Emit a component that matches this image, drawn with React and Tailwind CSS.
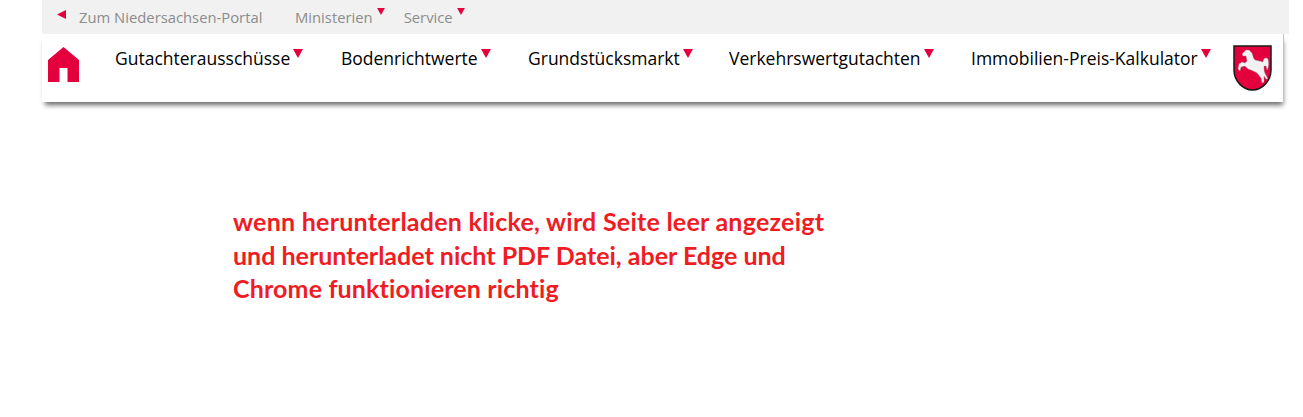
import React from 'react';

const navItems = [
    { label: 'Gutachterausschüsse', w: 'w-[226px]' },
    { label: 'Bodenrichtwerte', w: 'w-[187px]' },
    { label: 'Grundstücksmarkt', w: 'w-[201px]' },
    { label: 'Verkehrswertgutachten', w: 'w-[242px]' },
    { label: 'Immobilien-Preis-Kalkulator', w: 'w-[262px]' },
];

const Caret = ({ small }) => (
    <svg
        width={small ? 8 : 10}
        height={small ? 7 : 9}
        viewBox="0 0 10 9"
        className={small ? 'ml-[4px] mt-[1px]' : 'ml-[3px] mt-[3px]'}
    >
        <polygon points="0,0 10,0 5,9" fill="#e4003c" />
    </svg>
);

const Shield = () => (
    <svg width="39" height="46" viewBox="0 0 39 46">
        <path d="M1 1 H38 V25 C38 36 29 45 19.5 45 C10 45 1 36 1 25 Z" fill="#e4003c" stroke="#1a1a1a" strokeWidth="1.5" />
        <path
            d="M13 5 L16 5 L19 8 C20 11 20 13 22 15 C25 16 28 16 30 17 C30 13 33 12 35 14 C36 18 36 22 34 25 L33 21 L31 21 C31 25 31 27 33 30 L35 34 L33 34 L31 31 L31 37 L29 38 L28 33 L24 28 C21 26 18 25 15 24 L12 21 L8 22 L7 26 L5 24 L6 19 L9 17 L12 18 L14 16 L13 11 L10 11 L9 9 Z"
            fill="#f2f2f2"
            stroke="#8a8a8a"
            strokeWidth="0.4"
        />
    </svg>
);

const App = () => {
    return (
        <div className="w-[1303px] h-[417px] bg-white overflow-hidden font-['Open_Sans',sans-serif]">
            {/* Top Bar */}
            <div className="ml-[42px] w-[1247px] h-[34px] bg-[#f1f1f1] flex items-start pt-[7px] text-[14.8px] leading-[20px] text-[#8c8c8c]">
                <svg width="10" height="9" viewBox="0 0 10 9" className="ml-[15px] mt-[3px]">
                    <polygon points="0,4.5 9,0 9,9" fill="#e4003c" />
                </svg>
                <span className="ml-[12px] w-[216px]">Zum Niedersachsen-Portal</span>
                <span>Ministerien</span>
                <Caret small />
                <span className="ml-[19px]">Service</span>
                <Caret small />
            </div>

            {/* Main Nav */}
            <div className="ml-[42px] w-[1242px] h-[68px] bg-white flex items-start border-r border-[#c4c4c4] shadow-[1px_5px_5px_-2px_rgba(0,0,0,0.6)]">
                <svg width="31" height="35" viewBox="0 0 31 35" className="ml-[6px] mt-[13px]">
                    <path d="M15.5 0 L31 13 V35 H19.5 V21 H11.5 V35 H0 V13 Z" fill="#e4003c" />
                </svg>
                <nav className="ml-[36px] flex items-start pt-[12px] text-[17.5px] leading-[24px] text-black">
                    {navItems.map((item) => (
                        <div key={item.label} className={`${item.w} flex items-start`}>
                            <span>{item.label}</span>
                            <Caret />
                        </div>
                    ))}
                </nav>
                <div className="mt-[11px]">
                    <Shield />
                </div>
            </div>

            {/* Note */}
            <main className="pl-[233px] pt-[103px]">
                <p className="font-['Lato',sans-serif] font-bold text-[25px] leading-[33.5px] text-[#f01c24] [font-variant-ligatures:none]">
                    <span className="tracking-[0.25px]">wenn herunterladen klicke, wird Seite leer angezeigt</span><br />
                    und herunterladet nicht PDF Datei, aber Edge und<br />
                    <span className="tracking-[0.15px]">Chrome funktionieren richtig</span>
                </p>
            </main>
        </div>
    );
};

export default App;
